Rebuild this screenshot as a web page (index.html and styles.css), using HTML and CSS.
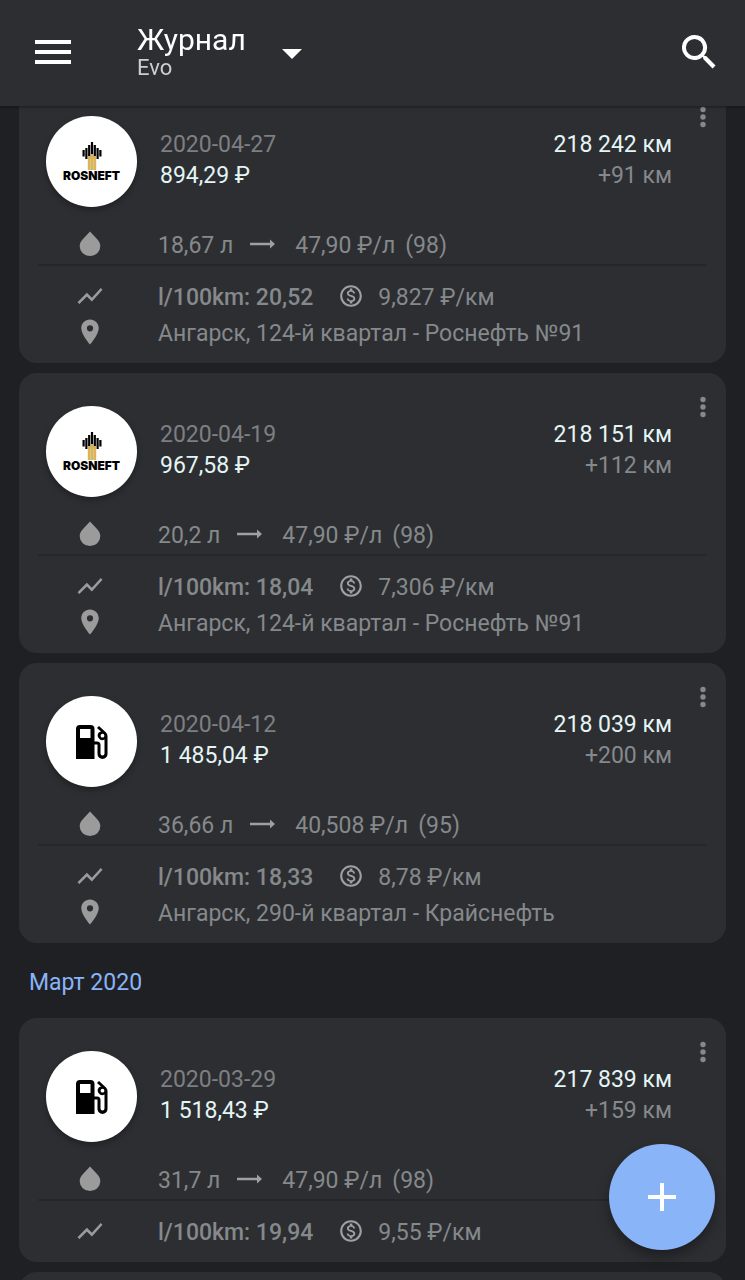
FILE: index.html
```html
<!DOCTYPE html>
<html lang="ru">
<head>
    <meta charset="UTF-8">
    <meta name="viewport" content="width=device-width, initial-scale=1.0">
    <title>Журнал</title>
    <link rel="stylesheet" href="styles.css">
</head>
<body>
    <!-- Shared icons -->
    <svg class="sprite" aria-hidden="true">
        <symbol id="drop" viewBox="0 0 30 30"><path d="M15 2.500 22 10c2.200 2.300 3.300 4.600 3.300 7.200A10.300 9.800 0 0 1 15 27 10.300 9.800 0 0 1 4.700 17.200C4.700 14.600 5.800 12.300 8 10z"/></symbol>
        <symbol id="trend" viewBox="0 0 24 24"><path d="M3.500 18.490l6-6.010 4 4L22 6.920l-1.410-1.410-7.090 7.970-4-4L2 16.990z"/></symbol>
        <symbol id="pin" viewBox="0 0 24 24"><path d="M12 2C8.130 2 5 5.130 5 9c0 5.250 7 13 7 13s7-7.750 7-13c0-3.870-3.130-7-7-7zm0 9.500a2.500 2.500 0 0 1 0-5 2.500 2.500 0 0 1 0 5z"/></symbol>
        <symbol id="arrow" viewBox="0 0 25 10"><path d="M0 3.800h20V.5L25 5l-5 4.500V6.200H0z"/></symbol>
        <symbol id="dollar" viewBox="0 0 24 24"><path d="M12 2C6.480 2 2 6.480 2 12s4.480 10 10 10 10-4.480 10-10S17.520 2 12 2zm0 18c-4.410 0-8-3.590-8-8s3.590-8 8-8 8 3.590 8 8-3.590 8-8 8zm.31-8.860c-1.770-.45-2.340-.94-2.340-1.670 0-.84.79-1.430 2.100-1.430 1.380 0 1.900.66 1.940 1.640h1.710c-.05-1.340-.87-2.570-2.490-2.970V5H10.900v1.690c-1.510.32-2.720 1.300-2.720 2.810 0 1.790 1.490 2.690 3.660 3.210 1.950.46 2.340 1.150 2.340 1.870 0 .53-.39 1.390-2.100 1.390-1.600 0-2.230-.72-2.320-1.640H8.040c.1 1.700 1.360 2.660 2.860 2.970V19h2.340v-1.670c1.520-.29 2.720-1.160 2.730-2.770-.01-2.200-1.900-2.960-3.660-3.420z"/></symbol>
        <symbol id="dots" viewBox="0 0 24 24"><circle cx="12" cy="4.500" r="2.700"/><circle cx="12" cy="12" r="2.700"/><circle cx="12" cy="19.500" r="2.700"/></symbol>
        <symbol id="pump" viewBox="0 0 34 36">
            <path fill-rule="evenodd" d="M1 35V5q0-4 4-4h10.500q4 0 4 4v12.500H22q3.500 0 3.500 3.500v8.500a2 2 0 0 0 4 0V15.500A4.600 4.600 0 0 1 24 8.300L26 7.500 22 4l2-2 7 6.500q1.500 1.500 1.500 3.500v18a5 5 0 0 1-10 0v-9.500h-3V35zM5 5v9h10.500V5zm22.500 4.800a1.900 1.900 0 1 0 0 3.800 1.900 1.900 0 0 0 0-3.800z"/>
        </symbol>
        <symbol id="rosneft" viewBox="0 0 20 28">
            <path d="M.5 8h2.200v6.500H.5zM3.300 6h2.200v11H3.300zM6.100 3h2.200v14H6.100zM8.900 0h2.200v16H8.900zM11.700 3h2.200v14h-2.200zM14.500 6h2.200v11h-2.200zM17.300 8h2.200v6.500h-2.200z"/>
            <path fill="#d9b65c" d="M5.800 14h2.700v14H5.800zM8.700 12h2.600v16H8.700zM11.500 14h2.700v14h-2.700z"/>
        </symbol>
    </svg>

    <header class="toolbar">
        <button class="menu-button" aria-label="Меню">
            <svg viewBox="0 0 36 24"><path d="M0 0h36v4H0zM0 10h36v4H0zM0 20h36v4H0z"/></svg>
        </button>
        <button class="vehicle">
            <span class="vehicle-text">
                <span class="title">Журнал</span>
                <span class="subtitle">Evo</span>
            </span>
            <svg class="caret" viewBox="0 0 20 10"><path d="M0 0h20L10 10z"/></svg>
        </button>
        <button class="search-button" aria-label="Поиск">
            <svg viewBox="0 0 34 34"><path fill-rule="evenodd" d="M12.500 0a12.500 12.500 0 0 1 9.600 20.500l.6.600h1.500l9.300 9.300-3 3-9.300-9.300v-1.500l-.6-.6A12.500 12.500 0 1 1 12.500 0zm0 3.900a8.600 8.600 0 1 0 0 17.200 8.600 8.600 0 0 0 0-17.200z"/></svg>
        </button>
    </header>

    <main class="journal">
        <article class="card">
            <div class="card-head">
                <div class="avatar">
                    <svg class="brand"><use href="#rosneft"/></svg>
                    <span class="brand-name">ROSNEFT</span>
                </div>
                <div class="summary">
                    <time class="date">2020-04-27</time>
                    <span class="value">894,29 ₽</span>
                </div>
                <div class="mileage">
                    <span class="value">218 242 км</span>
                    <span>+91 км</span>
                </div>
                <button class="more" aria-label="Ещё"><svg><use href="#dots"/></svg></button>
            </div>
            <div class="row fuel">
                <svg class="icon"><use href="#drop"/></svg>
                <span>18,67 л</span>
                <svg class="arrow"><use href="#arrow"/></svg>
                <span>47,90 ₽/л</span>
                <span class="grade">(98)</span>
            </div>
            <div class="row">
                <svg class="icon"><use href="#trend"/></svg>
                <span class="usage">l/100km: 20,52</span>
                <svg class="dollar"><use href="#dollar"/></svg>
                <span>9,827 ₽/км</span>
            </div>
            <div class="row">
                <svg class="icon"><use href="#pin"/></svg>
                <span>Ангарск, 124-й квартал - Роснефть №91</span>
            </div>
        </article>

        <article class="card">
            <div class="card-head">
                <div class="avatar">
                    <svg class="brand"><use href="#rosneft"/></svg>
                    <span class="brand-name">ROSNEFT</span>
                </div>
                <div class="summary">
                    <time class="date">2020-04-19</time>
                    <span class="value">967,58 ₽</span>
                </div>
                <div class="mileage">
                    <span class="value">218 151 км</span>
                    <span>+112 км</span>
                </div>
                <button class="more" aria-label="Ещё"><svg><use href="#dots"/></svg></button>
            </div>
            <div class="row fuel">
                <svg class="icon"><use href="#drop"/></svg>
                <span>20,2 л</span>
                <svg class="arrow"><use href="#arrow"/></svg>
                <span>47,90 ₽/л</span>
                <span class="grade">(98)</span>
            </div>
            <div class="row">
                <svg class="icon"><use href="#trend"/></svg>
                <span class="usage">l/100km: 18,04</span>
                <svg class="dollar"><use href="#dollar"/></svg>
                <span>7,306 ₽/км</span>
            </div>
            <div class="row">
                <svg class="icon"><use href="#pin"/></svg>
                <span>Ангарск, 124-й квартал - Роснефть №91</span>
            </div>
        </article>

        <article class="card">
            <div class="card-head">
                <div class="avatar">
                    <svg class="pump"><use href="#pump"/></svg>
                </div>
                <div class="summary">
                    <time class="date">2020-04-12</time>
                    <span class="value">1 485,04 ₽</span>
                </div>
                <div class="mileage">
                    <span class="value">218 039 км</span>
                    <span>+200 км</span>
                </div>
                <button class="more" aria-label="Ещё"><svg><use href="#dots"/></svg></button>
            </div>
            <div class="row fuel">
                <svg class="icon"><use href="#drop"/></svg>
                <span>36,66 л</span>
                <svg class="arrow"><use href="#arrow"/></svg>
                <span>40,508 ₽/л</span>
                <span class="grade">(95)</span>
            </div>
            <div class="row">
                <svg class="icon"><use href="#trend"/></svg>
                <span class="usage">l/100km: 18,33</span>
                <svg class="dollar"><use href="#dollar"/></svg>
                <span>8,78 ₽/км</span>
            </div>
            <div class="row">
                <svg class="icon"><use href="#pin"/></svg>
                <span>Ангарск, 290-й квартал - Крайснефть</span>
            </div>
        </article>

        <h2 class="month">Март 2020</h2>

        <article class="card">
            <div class="card-head">
                <div class="avatar">
                    <svg class="pump"><use href="#pump"/></svg>
                </div>
                <div class="summary">
                    <time class="date">2020-03-29</time>
                    <span class="value">1 518,43 ₽</span>
                </div>
                <div class="mileage">
                    <span class="value">217 839 км</span>
                    <span>+159 км</span>
                </div>
                <button class="more" aria-label="Ещё"><svg><use href="#dots"/></svg></button>
            </div>
            <div class="row fuel">
                <svg class="icon"><use href="#drop"/></svg>
                <span>31,7 л</span>
                <svg class="arrow"><use href="#arrow"/></svg>
                <span>47,90 ₽/л</span>
                <span class="grade">(98)</span>
            </div>
            <div class="row">
                <svg class="icon"><use href="#trend"/></svg>
                <span class="usage">l/100km: 19,94</span>
                <svg class="dollar"><use href="#dollar"/></svg>
                <span>9,55 ₽/км</span>
            </div>
        </article>

        <article class="card card-empty"></article>
    </main>

    <button class="fab" aria-label="Добавить">
        <svg viewBox="0 0 28 28"><path d="M12 0h4v12h12v4H16v12h-4V16H0v-4h12z"/></svg>
    </button>
</body>
</html>
```
FILE: styles.css
```css
/* General Styles */
* {
    box-sizing: border-box;
}
body {
    margin: 0;
    height: 100vh;
    overflow: hidden;
    background-color: #1f2023;
    color: #85898b;
    font-family: Roboto, sans-serif;
    font-size: 23px;
    line-height: 30px;
}
button {
    padding: 0;
    border: none;
    background: none;
    color: inherit;
    font: inherit;
    cursor: pointer;
}
svg {
    display: block;
    flex-shrink: 0;
    fill: currentColor;
}
.sprite {
    position: absolute;
    width: 0;
    height: 0;
}

/* Toolbar */
.toolbar {
    position: fixed;
    top: 0;
    left: 0;
    right: 0;
    z-index: 1;
    display: flex;
    align-items: center;
    height: 106px;
    padding: 0 29px 2px 35px;
    background-color: #2d2e32;
    box-shadow: 0 1px 3px rgba(0, 0, 0, 0.4);
    color: #fff;
}
.menu-button svg {
    width: 36px;
    height: 24px;
}
.vehicle {
    display: flex;
    align-items: center;
    gap: 36px;
    margin-left: 66px;
    text-align: left;
}
.title {
    display: block;
    font-size: 30px;
    line-height: 32px;
}
.subtitle {
    display: block;
    color: #cdced0;
    font-size: 22px;
    line-height: 24px;
}
.caret {
    width: 20px;
    height: 10px;
    margin-top: 3px;
}
.search-button {
    margin-left: auto;
}
.search-button svg {
    width: 34px;
    height: 34px;
}

/* Journal */
.journal {
    height: 100%;
    padding: 83px 19px 0;
    overflow-y: auto;
    scrollbar-width: none;
}
.card {
    margin-bottom: 10px;
    padding-bottom: 12px;
    border-radius: 18px;
    background-color: #2d2e32;
}
.card-empty {
    height: 244px;
}
.card-head {
    display: flex;
    align-items: flex-start;
    padding: 22px 11px 0 27px;
}
.avatar {
    display: flex;
    flex-direction: column;
    align-items: center;
    justify-content: center;
    width: 91px;
    height: 91px;
    margin-top: 11px;
    border-radius: 50%;
    background-color: #fff;
    box-shadow: 0 3px 6px rgba(0, 0, 0, 0.3);
    color: #000;
}
.brand {
    width: 20px;
    height: 28px;
}
.brand-name {
    font-family: Inter, sans-serif;
    font-size: 12px;
    font-weight: 900;
    line-height: 12px;
}
.pump {
    width: 34px;
    height: 36px;
}
.summary, .mileage {
    display: flex;
    flex-direction: column;
    margin-top: 24px;
    line-height: 31px;
}
.summary {
    margin-left: 23px;
}
.mileage {
    margin-left: auto;
    margin-right: 19px;
    text-align: right;
}
.date {
    color: #7d7f82;
}
.value {
    color: #e3f5f5;
}
.more svg {
    width: 24px;
    height: 24px;
}

/* Card rows */
.row {
    display: flex;
    align-items: center;
    height: 36px;
    margin: 0 19px;
    padding: 0 0 2px 37px;
}
.row span {
    padding-top: 4px;
}
.fuel {
    height: 40px;
    margin-top: 19px;
    margin-bottom: 13px;
    border-bottom: 2px solid #26272a;
}
.icon {
    width: 30px;
    height: 30px;
    margin-right: 53px;
    color: #9b9b9c;
}
.arrow {
    width: 25px;
    height: 10px;
    margin: 0 20px 0 17px;
    color: #a0a0a1;
}
.grade {
    margin-left: 10px;
}
.usage {
    font-weight: 500;
}
.dollar {
    width: 26px;
    height: 26px;
    margin: 0 14px 0 25px;
    color: #a0a0a1;
}
.month {
    margin: 0;
    padding: 15px 10px 20px;
    color: #8ab4f8;
    font-size: 23px;
    font-weight: 400;
}

/* Floating button */
.fab {
    position: fixed;
    right: 30px;
    bottom: 30px;
    z-index: 1;
    display: flex;
    align-items: center;
    justify-content: center;
    width: 106px;
    height: 106px;
    border-radius: 50%;
    background-color: #8ab4f8;
    box-shadow: 0 6px 12px rgba(0, 0, 0, 0.35);
    color: #fff;
}
.fab svg {
    width: 28px;
    height: 28px;
}
```
